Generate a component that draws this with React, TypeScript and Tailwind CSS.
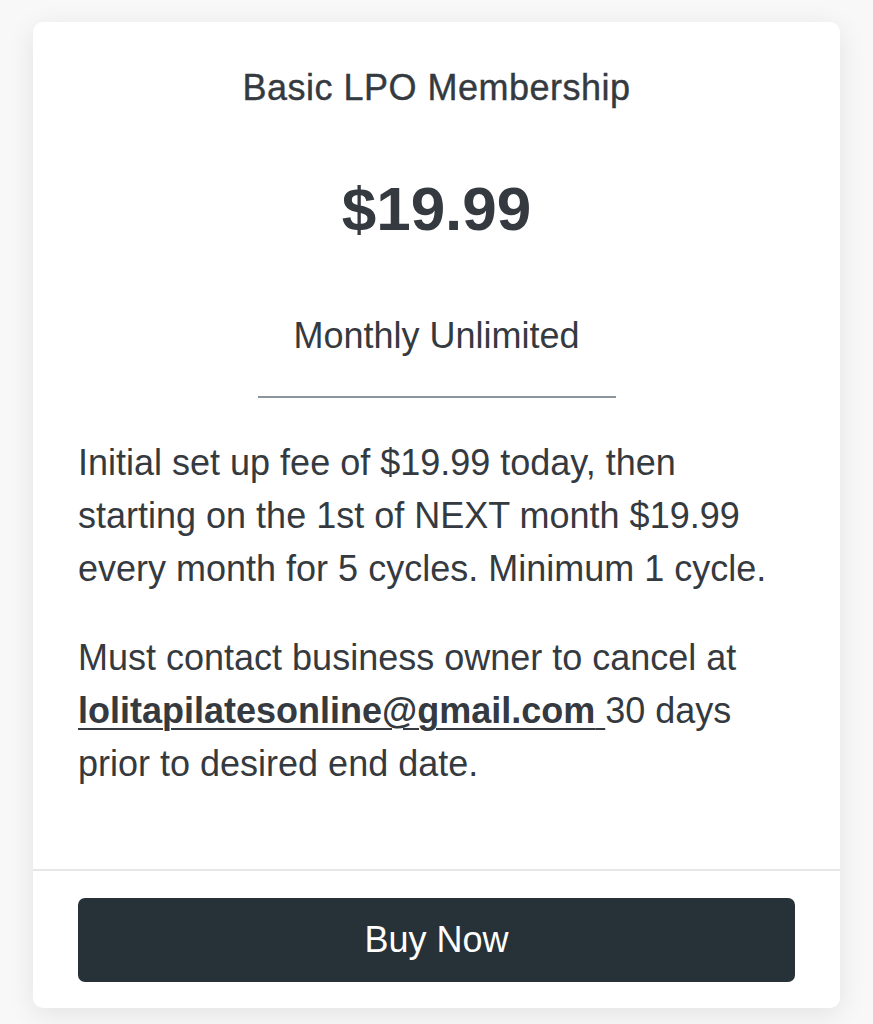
import React from 'react';

const App: React.FC = () => {
  return (
    <div className="min-h-screen bg-[#f8f8f8] px-[33px] pt-[22px] pb-4 font-['Liberation_Sans',Arial,sans-serif] text-[#353a40]">
      <div className="bg-white rounded-[10px] shadow-[0_6px_28px_rgba(0,0,0,0.09)] overflow-hidden">
        {/* Plan header */}
        <div className="px-[45px] pt-[44px] pb-[79px] flex flex-col">
          <h2 className="text-center text-[36px] leading-[43px] tracking-[0.5px] [-webkit-text-stroke:0.4px_#353a40]">
            Basic LPO Membership
          </h2>
          <div className="mt-[68px] text-center text-[62px] leading-[64px] font-bold">$19.99</div>
          <div className="mt-[69px] text-center text-[36px] leading-[52px]">Monthly Unlimited</div>
          <div className="mt-[34px] mx-auto w-[358px] h-[2px] bg-[#8d959c]" />

          {/* Description */}
          <div className="mt-[38px] text-[36px] leading-[53px]">
            <p>
              Initial set up fee of $19.99 today, then starting on the 1st of NEXT month $19.99 every month for 5 cycles. Minimum 1 cycle.
            </p>
            <p className="mt-[36px]">
              Must contact business owner to cancel at{' '}
              <a href="#" className="font-bold underline underline-offset-[5px] decoration-2">
                lolitapilatesonline@gmail.com{' '}
              </a>
              30 days prior to desired end date.
            </p>
          </div>
        </div>

        {/* Footer */}
        <div className="border-t-2 border-[#e6e6e6] px-[45px] pt-[27px] pb-[26px]">
          <button className="w-full h-[84px] rounded-[7px] bg-[#263238] text-white text-[36px]">
            Buy Now
          </button>
        </div>
      </div>
    </div>
  );
};

export default App;
